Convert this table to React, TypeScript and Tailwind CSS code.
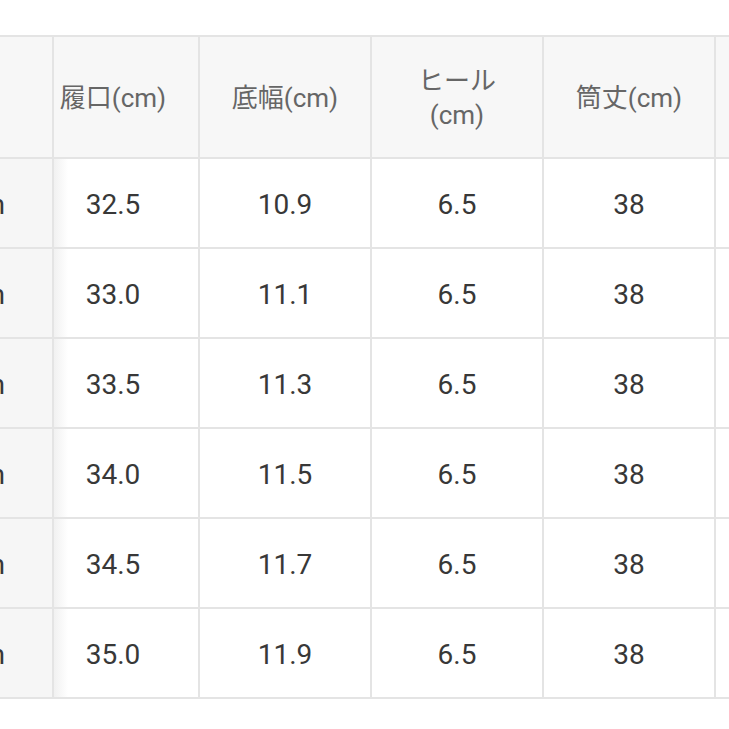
import type { ReactNode } from 'react'

const rows = [
  { size: '22.5cm', mouth: '32.5', sole: '10.9', heel: '6.5', shaft: '38' },
  { size: '23.0cm', mouth: '33.0', sole: '11.1', heel: '6.5', shaft: '38' },
  { size: '23.5cm', mouth: '33.5', sole: '11.3', heel: '6.5', shaft: '38' },
  { size: '24.0cm', mouth: '34.0', sole: '11.5', heel: '6.5', shaft: '38' },
  { size: '24.5cm', mouth: '34.5', sole: '11.7', heel: '6.5', shaft: '38' },
  { size: '25.0cm', mouth: '35.0', sole: '11.9', heel: '6.5', shaft: '38' },
]

function Cell({ className, children }: { className: string; children?: ReactNode }) {
  return (
    <div className={`flex shrink-0 items-center justify-center border-r-2 border-[#e4e4e4] text-center ${className}`}>
      {children}
    </div>
  )
}

export default function App() {
  return (
    <div
      className="h-[729px] w-[729px] overflow-hidden bg-white pt-[35px]"
      style={{ fontFamily: 'Roboto, "Noto Sans CJK JP", sans-serif' }}
    >
      <div className="w-[820px] border-t-2 border-[#e4e4e4]">
        {/* header */}
        <div className="flex h-[122px] border-b-2 border-[#e4e4e4] bg-[#f7f7f7] text-[26px] leading-[34px] text-[#666]">
          <Cell className="w-[54px]" />
          <Cell className="w-[146px] pr-[26px] pt-[2px]">履口(cm)</Cell>
          <Cell className="w-[172px] pt-[2px]">底幅(cm)</Cell>
          <Cell className="w-[172px] pt-[2px]">
            ヒール
            <br />
            (cm)
          </Cell>
          <Cell className="w-[172px] pt-[2px]">筒丈(cm)</Cell>
          <Cell className="w-[104px]" />
        </div>

        {/* body */}
        {rows.map((r) => (
          <div key={r.size} className="flex h-[90px] border-b-2 border-[#e4e4e4] text-[28px] text-[#383838]">
            <div className="flex w-[54px] shrink-0 items-center justify-end overflow-hidden whitespace-nowrap border-r-2 border-[#e4e4e4] bg-[#f6f6f6] pr-[47px] pt-[4px]">
              {r.size}
            </div>
            <Cell className="w-[146px] bg-[linear-gradient(to_right,#f1f1f1,#ffffff_14px)] pr-[26px] pt-[4px]">{r.mouth}</Cell>
            <Cell className="w-[172px] pt-[4px]">{r.sole}</Cell>
            <Cell className="w-[172px] pt-[4px]">{r.heel}</Cell>
            <Cell className="w-[172px] pt-[4px]">{r.shaft}</Cell>
            <Cell className="w-[104px]" />
          </div>
        ))}
      </div>
    </div>
  )
}
